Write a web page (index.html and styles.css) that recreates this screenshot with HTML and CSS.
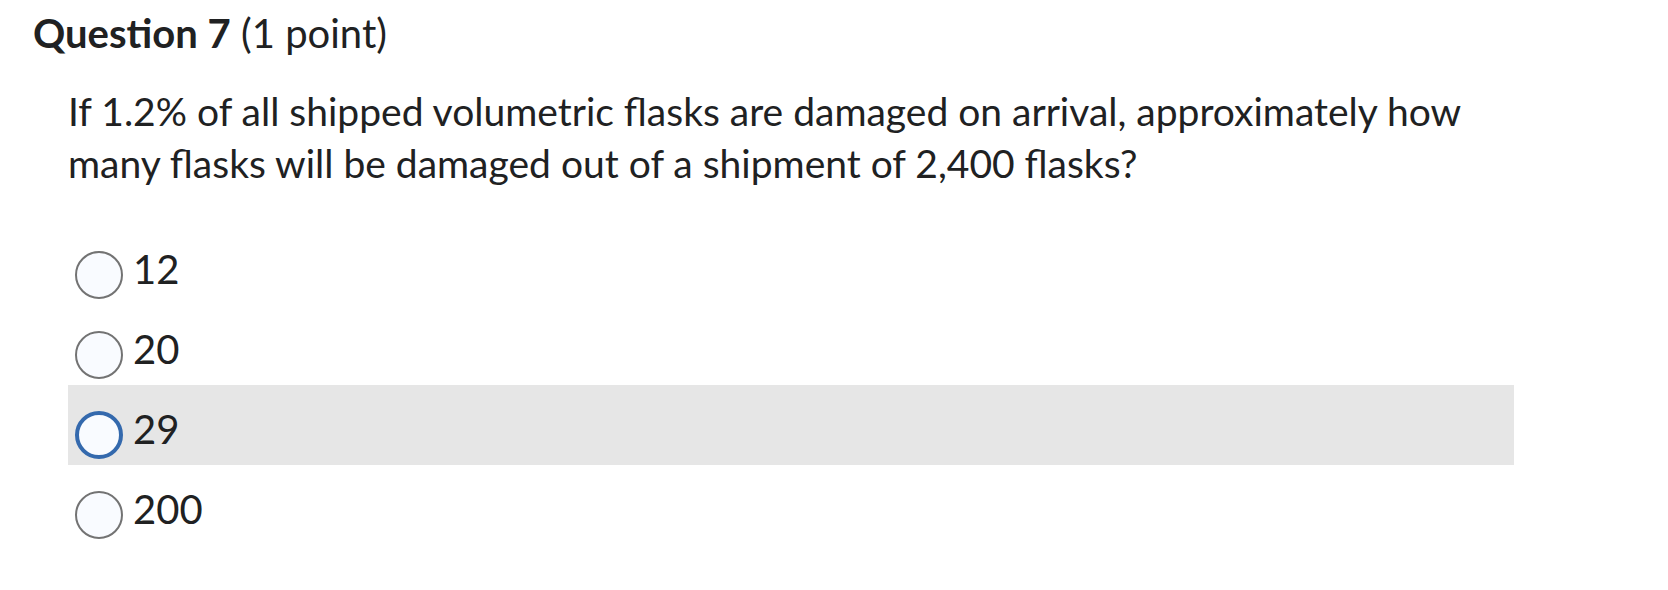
FILE: index.html
```html
<!DOCTYPE html>
<html lang="en">
<head>
<meta charset="utf-8">
<title>Question 7</title>
<link rel="stylesheet" href="styles.css">
</head>
<body>
<div class="quiz">
  <h2 class="title"><span class="title-main">Question 7</span> <span class="title-points">(1 point)</span></h2>
  <div class="body">
    <p class="prompt">If 1.2% of all shipped volumetric flasks are damaged on arrival, approximately how many flasks will be damaged out of a shipment of 2,400 flasks?</p>
    <div class="choices">
      <label class="choice"><span class="radio"></span><span class="label">12</span></label>
      <label class="choice"><span class="radio"></span><span class="label">20</span></label>
      <label class="choice hover"><span class="radio focus"></span><span class="label">29</span></label>
      <label class="choice"><span class="radio"></span><span class="label">200</span></label>
    </div>
  </div>
</div>
</body>
</html>
```
FILE: styles.css
```css
html, body {
  margin: 0;
  padding: 0;
  background: #ffffff;
}
body {
  font-family: Lato, "Open Sans", sans-serif;
  color: #202122;
}
.quiz {
  padding: 9px 0 0 33px;
}
.title {
  margin: 0;
  font-size: 40px;
  line-height: 48px;
  font-weight: 400;
}
.title-main {
  font-weight: 700;
}
.body {
  margin-top: 28px;
  padding-left: 35px;
  width: 1446px;
}
.prompt {
  margin: 0;
  font-size: 39px;
  line-height: 52px;
  width: 1420px;
}
.choices {
  margin-top: 36px;
  display: flex;
  flex-direction: column;
}
.choice {
  display: flex;
  align-items: center;
  height: 80px;
  box-sizing: border-box;
  padding: 20px 0 0 7px;
}
.choice.hover {
  background: #e6e6e6;
}
.radio {
  width: 48px;
  height: 48px;
  box-sizing: border-box;
  border: 2px solid #737373;
  border-radius: 50%;
  background: #f9fbff;
  flex: none;
}
.radio.focus {
  border: 4px solid #3469ad;
}
.label {
  margin-left: 10px;
  margin-bottom: 11px;
  font-size: 40px;
  line-height: 43px;
}
```
